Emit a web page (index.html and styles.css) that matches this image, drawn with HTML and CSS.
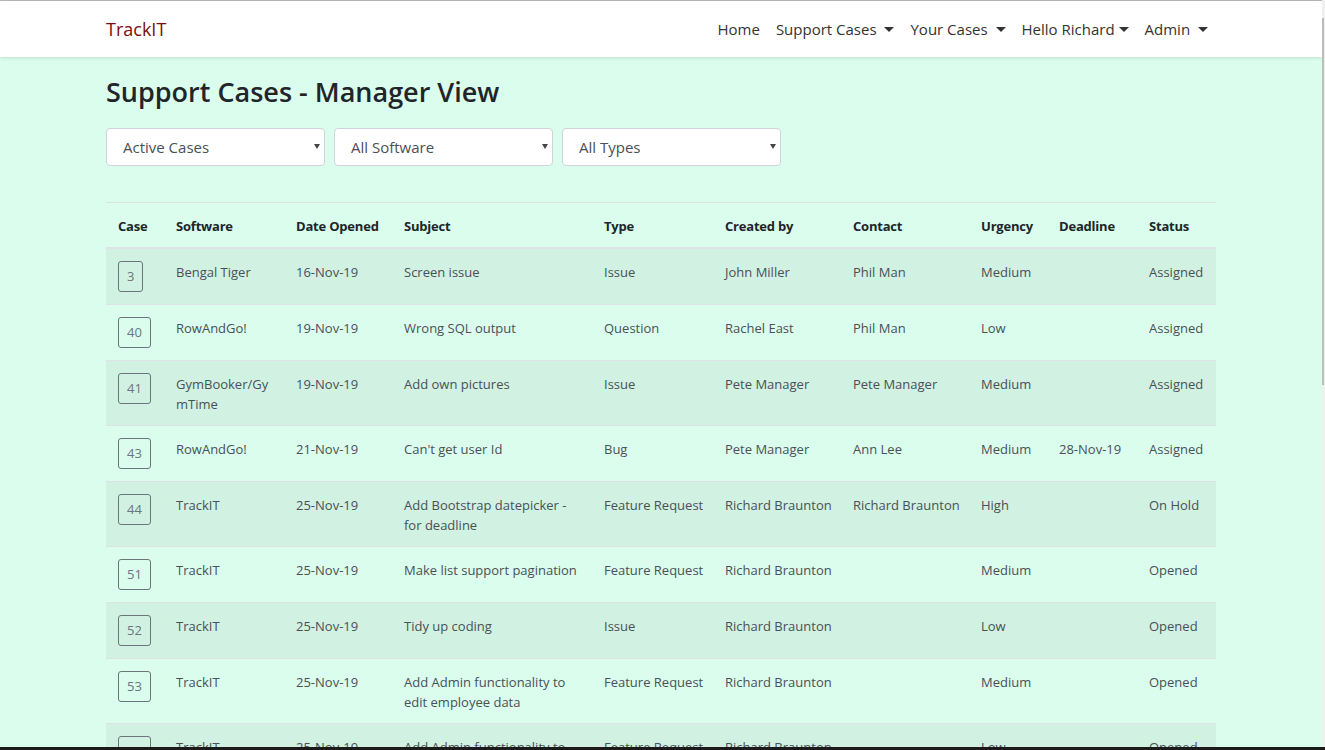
FILE: index.html
```html
<!DOCTYPE html>
<html lang="en">
<head>
<meta charset="utf-8">
<title>TrackIT - Support Cases</title>
<link rel="stylesheet" href="styles.css">
</head>
<body>
<div class="chrome-top"></div>
<nav class="navbar">
  <div class="container nav-inner">
    <a class="brand" href="#">TrackIT</a>
    <ul class="nav-links">
      <li><a href="#">Home</a></li>
      <li><a href="#" class="dd">Support Cases&nbsp;</a></li>
      <li><a href="#" class="dd">Your Cases&nbsp;</a></li>
      <li><a href="#" class="dd">Hello Richard</a></li>
      <li><a href="#" class="dd">Admin&nbsp;</a></li>
    </ul>
  </div>
</nav>

<main class="container">
  <h3 class="title">Support Cases - Manager View</h3>
  <div class="filters">
    <div class="select"><span>Active Cases</span></div>
    <div class="select"><span>All Software</span></div>
    <div class="select"><span>All Types</span></div>
  </div>

  <table class="cases">
    <colgroup>
      <col class="c-case"><col class="c-soft"><col class="c-date"><col class="c-subj"><col class="c-type">
      <col class="c-by"><col class="c-contact"><col class="c-urg"><col class="c-dead"><col class="c-status">
    </colgroup>
    <thead>
      <tr><th>Case</th><th>Software</th><th>Date Opened</th><th>Subject</th><th>Type</th><th>Created by</th><th>Contact</th><th>Urgency</th><th>Deadline</th><th>Status</th></tr>
    </thead>
    <tbody>
      <tr><td class="case"><span class="case-btn">3</span></td><td class="wrap brk">Bengal Tiger</td><td>16-Nov-19</td><td class="wrap">Screen issue</td><td>Issue</td><td>John Miller</td><td>Phil Man</td><td>Medium</td><td></td><td>Assigned</td></tr>
      <tr><td class="case"><span class="case-btn">40</span></td><td class="wrap brk">RowAndGo!</td><td>19-Nov-19</td><td class="wrap">Wrong SQL output</td><td>Question</td><td>Rachel East</td><td>Phil Man</td><td>Low</td><td></td><td>Assigned</td></tr>
      <tr><td class="case"><span class="case-btn">41</span></td><td class="wrap brk">GymBooker/GymTime</td><td>19-Nov-19</td><td class="wrap">Add own pictures</td><td>Issue</td><td>Pete Manager</td><td>Pete Manager</td><td>Medium</td><td></td><td>Assigned</td></tr>
      <tr><td class="case"><span class="case-btn">43</span></td><td class="wrap brk">RowAndGo!</td><td>21-Nov-19</td><td class="wrap">Can't get user Id</td><td>Bug</td><td>Pete Manager</td><td>Ann Lee</td><td>Medium</td><td>28-Nov-19</td><td>Assigned</td></tr>
      <tr><td class="case"><span class="case-btn">44</span></td><td class="wrap brk">TrackIT</td><td>25-Nov-19</td><td class="wrap">Add Bootstrap datepicker - for deadline</td><td>Feature Request</td><td>Richard Braunton</td><td>Richard Braunton</td><td>High</td><td></td><td>On Hold</td></tr>
      <tr><td class="case"><span class="case-btn">51</span></td><td class="wrap brk">TrackIT</td><td>25-Nov-19</td><td class="wrap">Make list support pagination</td><td>Feature Request</td><td>Richard Braunton</td><td></td><td>Medium</td><td></td><td>Opened</td></tr>
      <tr><td class="case"><span class="case-btn">52</span></td><td class="wrap brk">TrackIT</td><td>25-Nov-19</td><td class="wrap">Tidy up coding</td><td>Issue</td><td>Richard Braunton</td><td></td><td>Low</td><td></td><td>Opened</td></tr>
      <tr><td class="case"><span class="case-btn">53</span></td><td class="wrap brk">TrackIT</td><td>25-Nov-19</td><td class="wrap">Add Admin functionality to edit employee data</td><td>Feature Request</td><td>Richard Braunton</td><td></td><td>Medium</td><td></td><td>Opened</td></tr>
      <tr><td class="case"><span class="case-btn">54</span></td><td class="wrap brk">TrackIT</td><td>25-Nov-19</td><td class="wrap">Add Admin functionality to edit employee data</td><td>Feature Request</td><td>Richard Braunton</td><td></td><td>Low</td><td></td><td>Opened</td></tr>
    </tbody>
  </table>
</main>

<div class="scrollbar"><div class="thumb"></div></div>
<div class="taskbar"></div>
</body>
</html>
```

FILE: styles.css
```css
* { box-sizing: border-box; }
html, body { margin: 0; padding: 0; }
body {
  font-family: "Open Sans", "Noto Sans", "Liberation Sans", sans-serif;
  font-size: 16px;
  line-height: 1.5;
  color: #212529;
  background: #dbfdee;
  width: 1322px;
  overflow: hidden;
  height: 750px;
}
.chrome-top { height: 1px; background: #b9b9b9; }
.container {
  width: 1140px;
  margin: 0 auto;
  padding: 0 15px;
}
.navbar {
  background: #fff;
  height: 56px;
  box-shadow: 0 1px 4px rgba(0,0,0,0.12);
  position: relative;
  z-index: 2;
}
.nav-inner {
  display: flex;
  align-items: center;
  justify-content: space-between;
  height: 56px;
}
.brand {
  color: #7a0c0c;
  font-size: 18px;
  text-decoration: none;
  line-height: 30px;
}
.nav-links {
  display: flex;
  list-style: none;
  margin: 0;
  padding: 0;
}
.nav-links a {
  display: block;
  padding: 8px;
  color: #333;
  text-decoration: none;
  font-size: 15px;
}
.dd::after {
  content: "";
  display: inline-block;
  vertical-align: 3px;
  margin-left: 4px;
  border-top: 5px solid #333;
  border-left: 5px solid transparent;
  border-right: 5px solid transparent;
}
.title {
  margin: 18px 0 19px;
  font-size: 27px;
  font-weight: 600;
  line-height: 34px;
  color: #212529;
}
.filters {
  display: flex;
  gap: 9px;
}
.select {
  position: relative;
  width: 219px;
  height: 38px;
  background: #fff;
  border: 1px solid #ced4da;
  border-radius: 4px;
  padding: 0 16px;
  display: flex;
  align-items: center;
  color: #495057;
  font-size: 15px;
}
.select::after {
  content: "";
  position: absolute;
  right: 4px;
  top: 15px;
  border-top: 5px solid #444;
  border-left: 3px solid transparent;
  border-right: 3px solid transparent;
}
.cases {
  width: 1110px;
  margin-top: 36px;
  border-collapse: collapse;
  table-layout: fixed;
  font-size: 13px;
  line-height: 20px;
}
.c-case { width: 58px; }
.c-soft { width: 120px; }
.c-date { width: 108px; }
.c-subj { width: 200px; }
.c-type { width: 121px; }
.c-by { width: 128px; }
.c-contact { width: 128px; }
.c-urg { width: 78px; }
.c-dead { width: 90px; }
.c-status { width: 79px; }
.cases th, .cases td {
  padding: 13px 12px 11px;
  text-align: left;
  vertical-align: top;
  border-top: 1px solid #dee2e6;
  white-space: nowrap;
}
.cases td.case { padding-top: 12px; padding-bottom: 12px; }
.cases td.wrap { white-space: normal; }
.cases th {
  font-weight: 700;
  color: #212529;
  border-bottom: 2px solid #dee2e6;
  letter-spacing: -0.2px;
}
.cases td { color: #495057; }
.cases td.brk { overflow-wrap: anywhere; }
.cases tbody tr:nth-child(odd) { background: #d1f1e2; }
.case-btn {
  display: inline-block;
  vertical-align: top;
  padding: 5px 8px;
  border: 1px solid #6c757d;
  border-radius: 3px;
  color: #6c757d;
  line-height: 19px;
  font-size: 13px;
}
.scrollbar {
  position: fixed;
  top: 0;
  right: 0;
  width: 3px;
  height: 750px;
  background: #f0f0f0;
}
.thumb {
  margin-top: 18px;
  width: 2px;
  height: 367px;
  background: #bdbdbd;
}
.taskbar {
  position: fixed;
  left: 0;
  bottom: 0;
  width: 1325px;
  height: 3px;
  background: #1b1b1b;
}
```
